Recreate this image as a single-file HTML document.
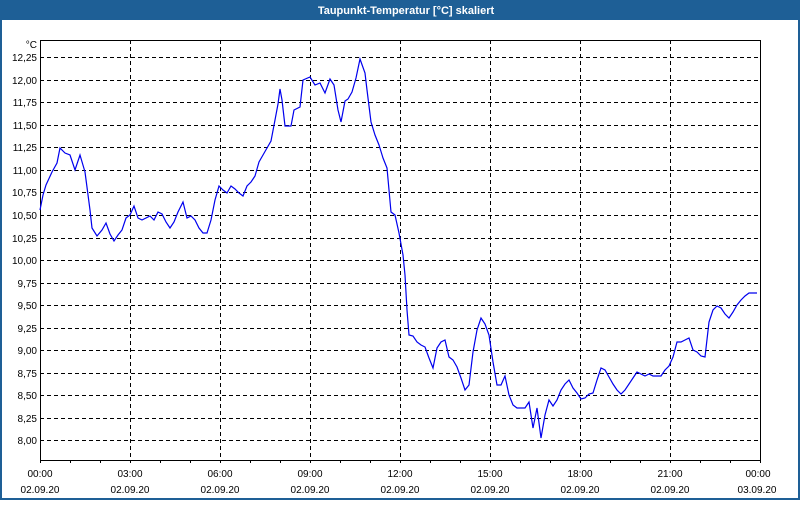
<!DOCTYPE html>
<html><head><style>
body{margin:0;width:800px;height:500px;overflow:hidden;background:#fff;font-family:"Liberation Sans",sans-serif}
</style></head><body>
<svg width="800" height="500" xmlns="http://www.w3.org/2000/svg" font-family="Liberation Sans, sans-serif" font-size="10">
<rect x="0" y="0" width="800" height="500" fill="#1e5f96"/>
<rect x="2" y="20" width="796" height="478" fill="#fff"/>
<text x="406" y="14" fill="#fff" font-weight="bold" font-size="11" text-anchor="middle">Taupunkt-Temperatur [°C] skaliert</text>
<g stroke="#000" stroke-dasharray="4,3" stroke-width="1">
<line x1="40" x2="760" y1="57.5" y2="57.5"/><line x1="40" x2="760" y1="80.5" y2="80.5"/><line x1="40" x2="760" y1="102.5" y2="102.5"/><line x1="40" x2="760" y1="125.5" y2="125.5"/><line x1="40" x2="760" y1="147.5" y2="147.5"/><line x1="40" x2="760" y1="170.5" y2="170.5"/><line x1="40" x2="760" y1="192.5" y2="192.5"/><line x1="40" x2="760" y1="215.5" y2="215.5"/><line x1="40" x2="760" y1="238.5" y2="238.5"/><line x1="40" x2="760" y1="260.5" y2="260.5"/><line x1="40" x2="760" y1="283.5" y2="283.5"/><line x1="40" x2="760" y1="305.5" y2="305.5"/><line x1="40" x2="760" y1="328.5" y2="328.5"/><line x1="40" x2="760" y1="350.5" y2="350.5"/><line x1="40" x2="760" y1="373.5" y2="373.5"/><line x1="40" x2="760" y1="395.5" y2="395.5"/><line x1="40" x2="760" y1="418.5" y2="418.5"/><line x1="40" x2="760" y1="440.5" y2="440.5"/>
<line x1="130.5" x2="130.5" y1="40" y2="460"/><line x1="220.5" x2="220.5" y1="40" y2="460"/><line x1="310.5" x2="310.5" y1="40" y2="460"/><line x1="400.5" x2="400.5" y1="40" y2="460"/><line x1="490.5" x2="490.5" y1="40" y2="460"/><line x1="580.5" x2="580.5" y1="40" y2="460"/><line x1="670.5" x2="670.5" y1="40" y2="460"/>
</g>
<rect x="40.5" y="40.5" width="720" height="420" fill="none" stroke="#000"/>
<g stroke="#000">
<path d="M70.5 460v3M100.5 460v3M130.5 460v3M160.5 460v3M190.5 460v3M220.5 460v3M250.5 460v3M280.5 460v3M310.5 460v3M340.5 460v3M370.5 460v3M400.5 460v3M430.5 460v3M460.5 460v3M490.5 460v3M520.5 460v3M550.5 460v3M580.5 460v3M610.5 460v3M640.5 460v3M670.5 460v3M700.5 460v3M730.5 460v3M760.5 460v3M40.5 460v3"/>
</g>
<polyline fill="none" stroke="#0000ee" stroke-width="1.2" points="40,210 43,195 46,185 52,172 57,163 60,148 65,153 70,155 75,170 80,155 85,172 90,210 92,228 97,236 102,230 106,223 110,234 114,241 118,235 122,230 126,218 130,215 134,206 138,218 142,220 146,218 150,216 154,220 158,212 162,214 166,222 170,228 174,222 178,212 183,202 187,218 191,216 195,220 199,228 203,233 207,233 211,220 215,200 219,186 223,190 227,193 231,186 235,189 239,193 243,196 247,186 251,182 255,176 259,162 263,155 267,148 271,141 275,120 278,104 280,89 282,100 285,126 291,126 294,110 300,107 303,80 310,77 315,85 320,83 325,93 330,79 334,85 338,110 341,122 345,101 348,99 352,92 356,78 360,59 365,73 367,90 371,122 375,135 379,145 383,158 387,168 391,212 395,215 399,233 403,255 405,275 407,310 409,335 413,336 417,342 421,345 425,347 429,358 433,368 437,348 441,342 445,340 449,357 453,360 457,367 461,378 465,390 469,385 473,352 477,330 481,318 485,324 489,335 493,362 497,385 501,385 505,376 509,395 513,405 517,408 521,408 525,408 529,402 533,428 537,408 541,438 545,415 549,400 553,406 557,400 561,390 565,384 569,380 573,388 577,393 581,399 585,398 589,394 593,393 597,380 601,368 605,370 609,377 613,384 617,390 621,394 625,390 629,384 633,378 637,372 641,374 645,376 649,374 653,376 657,376 661,376 665,370 669,366 673,357 677,342 681,342 685,340 689,338 693,350 697,352 701,356 705,357 709,322 713,310 717,306 721,308 725,314 729,318 733,312 737,305 741,300 745,296 749,293 753,293 757,293"/>
<g fill="#000" text-anchor="end">
<text x="37" y="48">°C</text>
<text x="37" y="61">12,25</text><text x="37" y="84">12,00</text><text x="37" y="106">11,75</text><text x="37" y="129">11,50</text><text x="37" y="151">11,25</text><text x="37" y="174">11,00</text><text x="37" y="196">10,75</text><text x="37" y="219">10,50</text><text x="37" y="242">10,25</text><text x="37" y="264">10,00</text><text x="37" y="287">9,75</text><text x="37" y="309">9,50</text><text x="37" y="332">9,25</text><text x="37" y="354">9,00</text><text x="37" y="377">8,75</text><text x="37" y="399">8,50</text><text x="37" y="422">8,25</text><text x="37" y="444">8,00</text>
</g>
<g fill="#000" text-anchor="middle">
<text x="40" y="477">00:00</text><text x="40" y="493">02.09.20</text>
<text x="130" y="477">03:00</text><text x="130" y="493">02.09.20</text>
<text x="220" y="477">06:00</text><text x="220" y="493">02.09.20</text>
<text x="310" y="477">09:00</text><text x="310" y="493">02.09.20</text>
<text x="400" y="477">12:00</text><text x="400" y="493">02.09.20</text>
<text x="490" y="477">15:00</text><text x="490" y="493">02.09.20</text>
<text x="580" y="477">18:00</text><text x="580" y="493">02.09.20</text>
<text x="670" y="477">21:00</text><text x="670" y="493">02.09.20</text>
<text x="758" y="477">00:00</text><text x="757" y="493">03.09.20</text>
</g>
</svg>
</body></html>
